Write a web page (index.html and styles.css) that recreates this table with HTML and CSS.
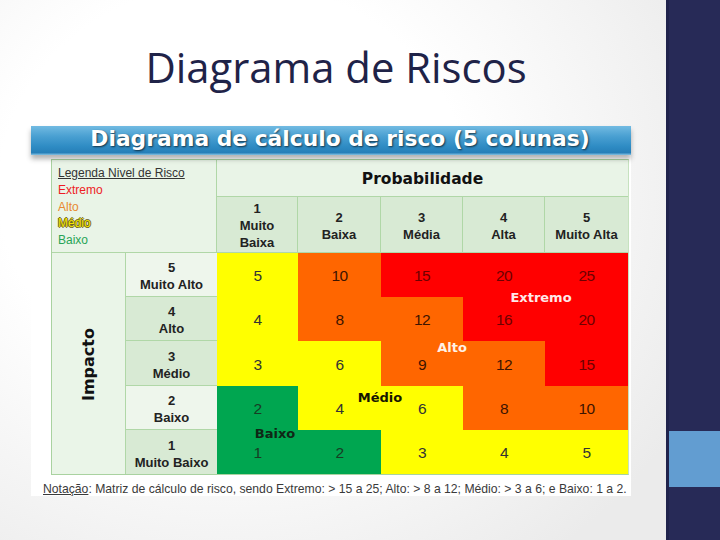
FILE: index.html
```html
<!DOCTYPE html>
<html lang="pt">
<head>
<meta charset="utf-8">
<title>Diagrama de Riscos</title>
<link rel="stylesheet" href="styles.css">
</head>
<body>
<div class="slide">
  <main class="content">
    <h1 class="title">Diagrama de Riscos</h1>
    <figure class="diagram">
      <div class="banner">Diagrama de cálculo de risco (5 colunas)</div>
      <div class="matrix">
        <div class="legend">
          <div class="legend-title">Legenda Nivel de Risco</div>
          <div class="lg-ext">Extremo</div>
          <div class="lg-alto">Alto</div>
          <div class="lg-med">Médio</div>
          <div class="lg-bx">Baixo</div>
        </div>
        <div class="prob">Probabilidade</div>
        <div class="ph">1<br>Muito<br>Baixa</div>
        <div class="ph">2<br>Baixa</div>
        <div class="ph">3<br>Média</div>
        <div class="ph">4<br>Alta</div>
        <div class="ph ph-last">5<br>Muito Alta</div>
        <div class="impact"><span class="impact-text">Impacto</span></div>

        <div class="ih light">5<br>Muito Alto</div>
        <div class="v y">5</div><div class="v o">10</div><div class="v r">15</div><div class="v r">20</div><div class="v r">25</div>

        <div class="ih dark">4<br>Alto</div>
        <div class="v y">4</div><div class="v o">8</div><div class="v o">12</div><div class="v r">16</div><div class="v r">20</div>

        <div class="ih dark">3<br>Médio</div>
        <div class="v y">3</div><div class="v y">6</div><div class="v o">9</div><div class="v o">12</div><div class="v r">15</div>

        <div class="ih light">2<br>Baixo</div>
        <div class="v g">2</div><div class="v y">4</div><div class="v y">6</div><div class="v o">8</div><div class="v o">10</div>

        <div class="ih dark ih-last">1<br>Muito Baixo</div>
        <div class="v g">1</div><div class="v g">2</div><div class="v y">3</div><div class="v y">4</div><div class="v y">5</div>

        <span class="zone zone-ext">Extremo</span>
        <span class="zone zone-alto">Alto</span>
        <span class="zone zone-med">Médio</span>
        <span class="zone zone-bx">Baixo</span>
      </div>
      <figcaption class="note"><u>Notação</u>: Matriz de cálculo de risco, sendo Extremo: &gt; 15 a 25; Alto: &gt; 8 a 12; Médio: &gt; 3 a 6; e Baixo: 1 a 2.</figcaption>
    </figure>
  </main>
  <aside class="sidebar">
    <div class="sb-top"></div>
    <div class="sb-accent"></div>
    <div class="sb-bottom"></div>
  </aside>
</div>
</body>
</html>
```
FILE: styles.css
```css
* { box-sizing: border-box; }
html, body { margin: 0; padding: 0; }
body { width: 720px; height: 540px; overflow: hidden; font-family: "Liberation Sans", Arial, sans-serif; }

.slide {
  display: flex;
  width: 720px;
  height: 540px;
}

.content {
  width: 666px;
  height: 540px;
  background: radial-gradient(ellipse 520px 460px at 35% 35%, #ffffff 45%, #ebebeb 100%);
  display: flex;
  flex-direction: column;
}

.title {
  margin: 0;
  padding: 46px 0 0 6px;
  height: 86px;
  font-family: "Open Sans", "DejaVu Sans", sans-serif;
  font-weight: 400;
  font-size: 41.8px;
  line-height: 41px;
  color: #1f2348;
  text-align: center;
}

.diagram {
  margin: 40px 0 0 31px;
  width: 600px;
  height: 370px;
  background: #ffffff;
  display: flex;
  flex-direction: column;
}

.banner {
  height: 31px;
  padding-left: 18px;
  background: linear-gradient(to bottom, #72bbe2 0%, #4aa0d2 35%, #2f8cc4 70%, #267fb8 92%, #86c3e4 100%);
  box-shadow: 0 4px 5px rgba(0, 0, 0, 0.3);
  color: #ffffff;
  font-family: "DejaVu Sans", Verdana, sans-serif;
  font-weight: 700;
  font-size: 21.8px;
  line-height: 26px;
  text-align: center;
  text-shadow: 1px 1px 2px rgba(0, 0, 0, 0.65);
  position: relative;
  z-index: 1;
}

.matrix {
  position: relative;
  margin: 4px 0 0 20px;
  width: 578px;
  display: grid;
  grid-template-columns: 74px 91px 81px 83px 82px 82px 83px;
  grid-template-rows: 37px 56px 44px 44px 45px 44px 44px;
  border: 1px solid #a9d2a0;
  border-right-color: #c6e2bf;
  background: #e9f4e7;
}

.legend {
  grid-column: 1 / 3;
  grid-row: 1 / 3;
  background: #e9f4e7;
  border-right: 1px solid #b0d7a7;
  border-bottom: 1px solid #b0d7a7;
  padding: 5px 0 0 6px;
  font-size: 12px;
  line-height: 16.8px;
}
.legend-title { color: #333; text-decoration: underline; }
.lg-ext { color: #ee1c24; }
.lg-alto { color: #e8892e; }
.lg-med {
  color: #f3e600;
  text-shadow: 1px 0 0 #6f6420, -1px 0 0 #6f6420, 0 1px 0 #6f6420, 0 -1px 0 #6f6420;
}
.lg-bx { color: #27a456; }

.prob {
  grid-column: 3 / 8;
  grid-row: 1;
  display: flex;
  align-items: center;
  justify-content: center;
  border-bottom: 1px solid #b0d7a7;
  background: #e9f4e7;
  font-family: "DejaVu Sans", Verdana, sans-serif;
  font-weight: 700;
  font-size: 15.5px;
  color: #111;
  padding-top: 1px;
}

.ph {
  grid-row: 2;
  display: flex;
  align-items: center;
  justify-content: center;
  text-align: center;
  background: #d8ead4;
  border-right: 1px solid #b0d7a7;
  border-bottom: 1px solid #b0d7a7;
  font-weight: 700;
  font-size: 13px;
  line-height: 17px;
  color: #222;
  padding-top: 2px;
}
.ph-last { border-right: 0; }

.impact {
  grid-column: 1;
  grid-row: 3 / 8;
  display: flex;
  align-items: center;
  justify-content: center;
  background: #eaf5e8;
  border-right: 1px solid #b0d7a7;
}
.impact-text {
  transform: rotate(-90deg);
  font-family: "DejaVu Sans", Verdana, sans-serif;
  font-weight: 700;
  font-size: 16px;
  color: #111;
  white-space: nowrap;
  margin-top: 2px;
}

.ih {
  grid-column: 2;
  display: flex;
  align-items: center;
  justify-content: center;
  text-align: center;
  border-bottom: 1px solid #b0d7a7;
  font-weight: 700;
  font-size: 13px;
  line-height: 17px;
  color: #222;
  padding-top: 3px;
}
.ih.light { background: #eef6ec; }
.ih.dark { background: #d8ead4; }
.ih-last { border-bottom: 0; }

.v {
  display: flex;
  align-items: center;
  justify-content: center;
  font-size: 15.5px;
  letter-spacing: -0.6px;
  padding-top: 2px;
}
.v.y { background: #ffff00; color: #333; }
.v.o { background: #ff6600; color: #3d1400; }
.v.r { background: #ff0000; color: #6e0000; }
.v.g { background: #00a650; color: #173d24; }

.zone {
  position: absolute;
  transform: translate(-50%, -50%);
  font-family: "DejaVu Sans", Verdana, sans-serif;
  font-weight: 700;
  font-size: 13px;
  white-space: nowrap;
}
.zone-ext { left: 489px; top: 137px; color: #ffe9e9; }
.zone-alto { left: 400px; top: 187px; color: #fff1e6; }
.zone-med { left: 328px; top: 237px; color: #161600; }
.zone-bx { left: 223px; top: 273px; color: #0f2716; }

.note {
  margin: 7px 0 0 12px;
  font-size: 12.2px;
  line-height: 14px;
  color: #3a3a3a;
  white-space: nowrap;
}

.sidebar {
  width: 54px;
  height: 540px;
  display: flex;
  flex-direction: column;
  border-left: 3px solid #20234c;
}
.sb-top { height: 431px; background: #272a57; }
.sb-accent { height: 56px; background: #629dd1; }
.sb-bottom { flex: 1; background: #272a57; }
```
